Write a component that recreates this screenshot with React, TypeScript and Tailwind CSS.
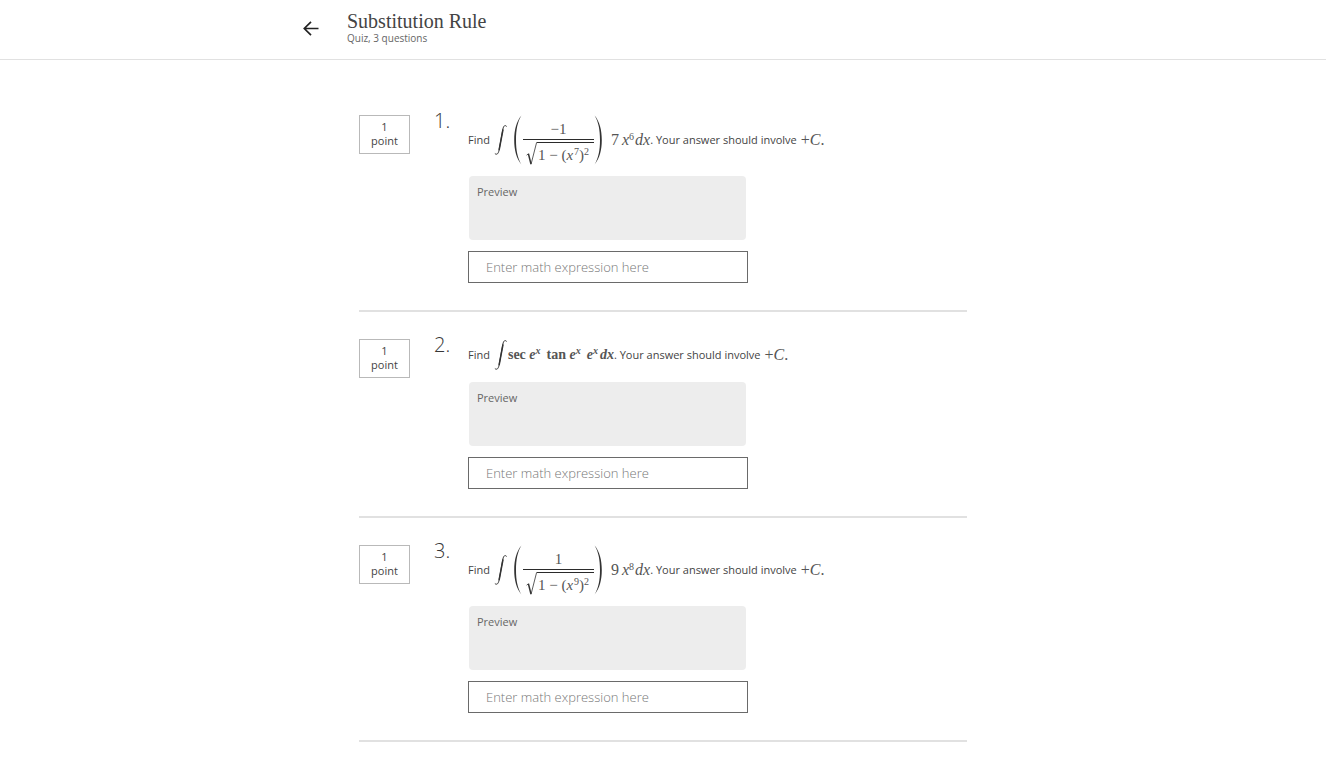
import type { ReactNode } from 'react';

const SERIF = "font-['Liberation_Serif',serif]";

function Sup({ children }: { children: ReactNode }) {
  return <sup className="static align-[5px] text-[10px] leading-none">{children}</sup>;
}

function Integral() {
  return (
    <svg className="h-8 w-3.5 shrink-0" viewBox="0 0 14 32" fill="none" stroke="#333" strokeLinecap="round" aria-label="integral">
      <path d="M12.4 2.2C11 .6 9.6 1.8 8.9 5L5.1 26C4.400 29.600 3 31.200 1.200 29.800" strokeWidth="1" />
      <path d="M8.900 6 5.200 25.500" strokeWidth="1.500" />
    </svg>
  );
}

function Paren({ side }: { side: 'left' | 'right' }) {
  const d =
    side === 'left'
      ? 'M8.4.6C3.4 6.5 1.2 15 1.2 25s2.2 18.500 7.200 24.400C4.500 43 3 35 3 25S4.500 7 8.400.6Z'
      : 'M.6.6C5.600 6.500 7.800 15 7.800 25S5.600 43.500.6 49.400C4.500 43 6 35 6 25S4.500 7 .6.6Z';
  return (
    <svg className="h-[50px] w-[9px] shrink-0" viewBox="0 0 9 50" fill="#333" aria-hidden="true">
      <path d={d} />
    </svg>
  );
}

function Fraction({ top, power }: { top: string; power: string }) {
  return (
    <span className={`${SERIF} flex w-[71px] flex-col text-[15px] text-[#555]`}>
      <span className="flex h-6 items-end justify-center leading-5">{top}</span>
      <span className="h-px bg-[#2b2b2b]" />
      <span className="flex h-[25px] items-stretch pl-[3px] pt-[2px]">
        <svg className="h-[23px] w-[11px] shrink-0" viewBox="0 0 11 23" fill="none" stroke="#333" aria-label="square root">
          <path d="M.6 13.200 2.400 11.800" strokeWidth=".8" />
          <path d="M2.400 11.800 5 22" strokeWidth="1.500" />
          <path d="M5 22.400 10.600.5H11" strokeWidth=".8" />
        </svg>
        <span className="flex-1 whitespace-nowrap border-t border-[#2b2b2b] pl-px leading-6">
          1 − (<i className="mr-px">x</i>
          <Sup>{power}</Sup>)<Sup>2</Sup>
        </span>
      </span>
    </span>
  );
}

function RootIntegral({ top, inner, factor, outer }: { top: string; inner: string; factor: string; outer: string }) {
  return (
    <>
      <Integral />
      <span className="ml-[5px] flex items-center">
        <Paren side="left" />
        <span className="pl-px">
          <Fraction top={top} power={inner} />
        </span>
        <Paren side="right" />
      </span>
      <span className={`${SERIF} ml-2 whitespace-nowrap text-base leading-6 text-[#555]`}>
        {factor}
        <i className="ml-[3px]">x</i>
        <Sup>{outer}</Sup>
        <i className="ml-px">dx</i>
      </span>
    </>
  );
}

function ExpPower() {
  return (
    <i>
      e<Sup>x</Sup>
    </i>
  );
}

function SecTanIntegral() {
  return (
    <>
      <Integral />
      <span className={`${SERIF} flex gap-1.5 whitespace-nowrap text-[14px] font-bold leading-6 text-[#555]`}>
        <span>
          sec <ExpPower />
        </span>
        <span>
          tan <ExpPower />
        </span>
        <span>
          <ExpPower />
          <i className="ml-0.5">dx</i>
        </span>
      </span>
    </>
  );
}

const questions: { id: number; math: ReactNode; height: string }[] = [
  { id: 1, math: <RootIntegral top="−1" inner="7" factor="7" outer="6" />, height: 'h-[50px]' },
  { id: 2, math: <SecTanIntegral />, height: 'h-8' },
  { id: 3, math: <RootIntegral top="1" inner="9" factor="9" outer="8" />, height: 'h-[50px]' },
];

function Question({ id, math, height }: { id: number; math: ReactNode; height: string }) {
  return (
    <li className="flex items-start border-b-2 border-[#e1e1e1] py-[27px]">
      <div className="w-[51px] shrink-0 border border-[#b9b9b9] py-1 pb-[5px] text-center text-[11px] leading-[14px] text-[#444]">
        <div>1</div>
        <div>point</div>
      </div>
      <div className="ml-6 w-[34px] shrink-0 text-xl font-light leading-3">{id}.</div>
      <div className="min-w-0 flex-1">
        <div className={`${height} flex items-center text-[11px] text-[#444]`}>
          <span className="mr-1">Find</span>
          {math}
          <span className="whitespace-nowrap">. Your answer should involve</span>
          <span className={`${SERIF} ml-1 whitespace-nowrap text-base leading-6 text-[#555]`}>
            +<i>C</i>.
          </span>
        </div>
        <div className="mt-[11px] max-w-[280px]">
          <label htmlFor={`answer-${id}`} className="ml-px mr-[2px] block h-16 rounded bg-[#ededed] p-2 text-[11px] leading-4 text-[#666]">
            Preview
          </label>
          <input
            id={`answer-${id}`}
            type="text"
            placeholder="Enter math expression here"
            className="mt-[11px] block h-8 w-full border border-[#6a6a6a] bg-white px-[17px] text-[13px] font-light text-[#333] placeholder:text-[#777]"
          />
        </div>
      </div>
    </li>
  );
}

export default function App() {
  return (
    <div className="bg-white font-['Open_Sans',sans-serif] text-[#373737]">
      <header className="border-b border-[#e1e1e1]">
        <div className="mx-auto flex h-[59px] max-w-[720px] items-start">
          <a href="#" aria-label="Back" className="mt-[21px]">
            <svg className="h-4 w-4" viewBox="0 0 16 16" fill="none" stroke="#222" strokeWidth="1.700">
              <path d="M15.500 7.500H1.500M8 .8 1.300 7.500 8 14.200" />
            </svg>
          </a>
          <div className="ml-7 pt-2.5">
            <h1 className={`${SERIF} text-[20px] leading-[22px] text-[#444]`}>Substitution Rule</h1>
            <p className="text-[10px] leading-3 text-[#666]">Quiz, 3 questions</p>
          </div>
        </div>
      </header>
      <main className="mx-auto max-w-[608px] pt-7">
        <ol>
          {questions.map((q) => (
            <Question key={q.id} {...q} />
          ))}
        </ol>
      </main>
    </div>
  );
}
